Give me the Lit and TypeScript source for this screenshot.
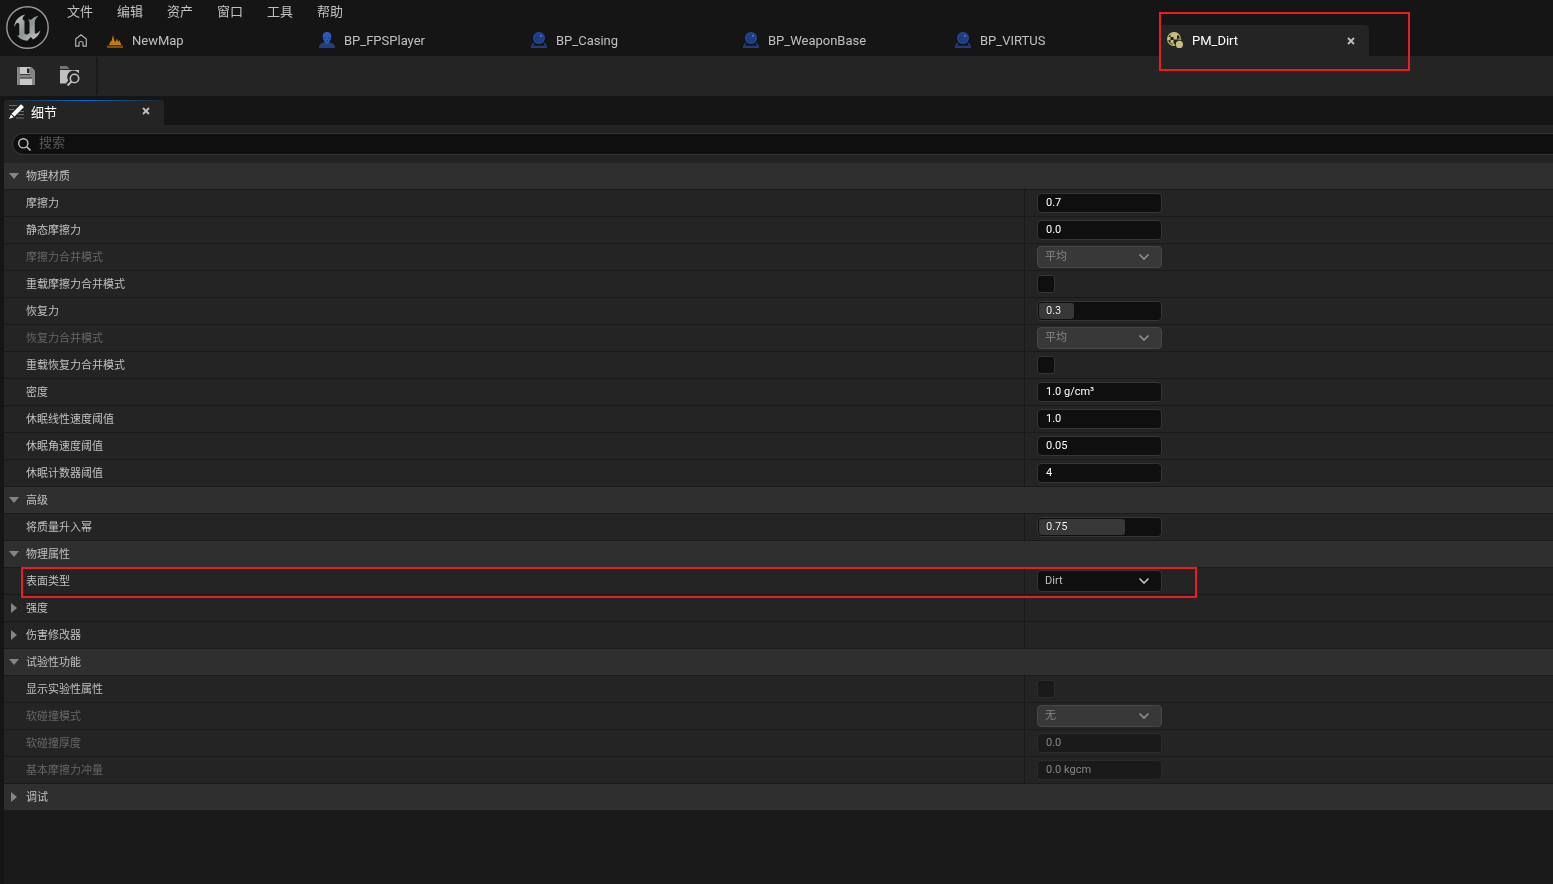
import { LitElement, html, svg, css, nothing, TemplateResult } from "lit";
import { customElement, property } from "lit/decorators.js";
import { classMap } from "lit/directives/class-map.js";
import { styleMap } from "lit/directives/style-map.js";

type Kind = "text" | "slider" | "select" | "check" | "none";

interface Row {
  id: string;
  label: string;
  kind: Kind;
  value?: string;
  ratio?: number;
  disabled?: boolean;
  labelDim?: boolean;
  expandable?: boolean;
  marked?: boolean;
}

interface Category {
  label: string;
  open: boolean;
  rows: Row[];
}

interface Tab {
  label: string;
  icon: "map" | "pawn" | "actor" | "physmat";
  active?: boolean;
}

const MENUS = ["文件", "编辑", "资产", "窗口", "工具", "帮助"];

const TABS: Tab[] = [
  { label: "NewMap", icon: "map" },
  { label: "BP_FPSPlayer", icon: "pawn" },
  { label: "BP_Casing", icon: "actor" },
  { label: "BP_WeaponBase", icon: "actor" },
  { label: "BP_VIRTUS", icon: "actor" },
  { label: "PM_Dirt", icon: "physmat", active: true },
];

const CATEGORIES: Category[] = [
  {
    label: "物理材质",
    open: true,
    rows: [
      { id: "friction", label: "摩擦力", kind: "text", value: "0.7" },
      { id: "static-friction", label: "静态摩擦力", kind: "text", value: "0.0" },
      { id: "friction-mode", label: "摩擦力合并模式", kind: "select", value: "平均", disabled: true, labelDim: true },
      { id: "override-friction", label: "重载摩擦力合并模式", kind: "check" },
      { id: "restitution", label: "恢复力", kind: "slider", value: "0.3", ratio: 0.3 },
      { id: "restitution-mode", label: "恢复力合并模式", kind: "select", value: "平均", disabled: true, labelDim: true },
      { id: "override-restitution", label: "重载恢复力合并模式", kind: "check" },
      { id: "density", label: "密度", kind: "text", value: "1.0 g/cm³" },
      { id: "sleep-linear", label: "休眠线性速度阈值", kind: "text", value: "1.0" },
      { id: "sleep-angular", label: "休眠角速度阈值", kind: "text", value: "0.05" },
      { id: "sleep-counter", label: "休眠计数器阈值", kind: "text", value: "4" },
    ],
  },
  {
    label: "高级",
    open: true,
    rows: [{ id: "mass-power", label: "将质量升入幂", kind: "slider", value: "0.75", ratio: 0.75 }],
  },
  {
    label: "物理属性",
    open: true,
    rows: [
      { id: "surface-type", label: "表面类型", kind: "select", value: "Dirt", marked: true },
      { id: "strength", label: "强度", kind: "none", expandable: true },
      { id: "damage", label: "伤害修改器", kind: "none", expandable: true },
    ],
  },
  {
    label: "试验性功能",
    open: true,
    rows: [
      { id: "show-experimental", label: "显示实验性属性", kind: "check", disabled: true },
      { id: "soft-mode", label: "软碰撞模式", kind: "select", value: "无", disabled: true, labelDim: true },
      { id: "soft-thickness", label: "软碰撞厚度", kind: "text", value: "0.0", disabled: true, labelDim: true },
      { id: "base-impulse", label: "基本摩擦力冲量", kind: "text", value: "0.0 kgcm", disabled: true, labelDim: true },
    ],
  },
  { label: "调试", open: false, rows: [] },
];

const ICONS: Record<Tab["icon"], TemplateResult> = {
  map: svg`
    <path d="M0 13.500 H16 V16 H0Z" fill="#7d5009"/>
    <path d="M2 13 L3.500 9.500 L4.500 9 L6 3 L7.500 9 L8.500 10 L10 6.500 L11.200 10 L12.200 8 L14.500 13Z" fill="#c67c05"/>`,
  pawn: svg`
    <path d="M0 16 V14.500 C.5 12 2.500 11.500 5 10.300 H11 C13.500 11.500 15.500 12 16 14.500 V16Z" fill="#243f7d"/>
    <path d="M8 0 C10.900 0 12.500 1.800 12.300 5 C12.100 7 11.200 8.500 10.200 10 C9.500 11.200 8.800 11.600 8 11.600 S6.500 11.200 5.800 10 C4.800 8.500 3.900 7 3.700 5 C3.500 1.800 5.100 0 8 0Z" fill="#2c5bc0"/>
    <path d="M5.300 5.500 H7 V6.500 H5.500Z M9 5.500 H10.700 L10.500 6.500 H9Z" fill="#142a5c"/>
    <path d="M7 8.800 H9" stroke="#142a5c" stroke-width=".8"/>`,
  actor: svg`
    <path d="M2.300 10.500 L0 14 V16 H16 V14 L13.700 10.500 L12.700 11.500 L13.800 13.800 H2.200 L3.300 11.500Z" fill="#233c78"/>
    <circle cx="8" cy="6" r="6" fill="#2348a0"/>
    <circle cx="8" cy="6" r="4.600" fill="#203c7a"/>
    <circle cx="9.900" cy="3.900" r="1.100" fill="#3f70dc"/>`,
  physmat: svg`
    <circle cx="7" cy="7" r="6.400" fill="#20201c" stroke="#c5bd7d" stroke-width="1.100"/>
    <path d="M3.500 1.700 L6.500 .6 H9 L11 1.600 V3.500 H6.500 V5 H3.500Z M6.500 3.500 H10 V7.500 H6.500Z M.8 5 H3.500 V8 H.8Z M3.500 8 H6.500 V11.500 H3.500Z M6 11.500 H7.500 V13.500 L5 13Z M10.800 7.500 H13.200 L12.500 8.500 H10.800Z" fill="#c5bd7d"/>
    <circle cx="12.400" cy="12.400" r="4.500" fill="#242424"/>
    <circle cx="12.400" cy="12.400" r="3.600" fill="#c5bd7d"/>
    <path d="M11 7.800 A1.500 1.500 0 0 1 14 7.800" fill="none" stroke="#8d885b" stroke-width="1"/>`,
};

const closeIcon = html`<svg width="8" height="8" viewBox="0 0 8 8" aria-hidden="true">
  <path d="M1 1 L7 7 M7 1 L1 7" stroke="#c0c0c0" stroke-width="1.800" fill="none" />
</svg>`;

const caret = (open: boolean) => html`<svg class="caret" width="10" height="10" viewBox="0 0 10 10" aria-hidden="true">
  ${open ? svg`<path d="M0 2 H10 L5 8Z" fill="#858585"/>` : svg`<path d="M2 0 L8 5 L2 10Z" fill="#858585"/>`}
</svg>`;

const sharedStyles = css`
  * {
    box-sizing: border-box;
  }
  button,
  input,
  select {
    margin: 0;
    font: inherit;
    color: inherit;
    outline: none;
  }
  button {
    display: flex;
    align-items: center;
    padding: 0;
    border: 0;
    background: none;
  }
  svg {
    display: block;
    flex: none;
  }
  .mark {
    position: absolute;
    z-index: 2;
    border: 2px solid #ed1c24;
    pointer-events: none;
  }
`;

@customElement("editor-header")
export class EditorHeader extends LitElement {
  static styles = [
    sharedStyles,
    css`
      :host {
        display: flex;
        height: 56px;
        background: #151515;
        color: #c0c0c0;
        font-size: 13px;
      }
      .logo {
        flex: none;
        padding: 6px;
      }
      .main {
        flex: 1;
        min-width: 0;
        display: flex;
        flex-direction: column;
      }
      .menus {
        display: flex;
        gap: 24px;
        height: 25px;
        padding: 0 12px 4px;
      }
      .strip {
        display: flex;
        height: 31px;
      }
      .home {
        flex: none;
        width: 45px;
        padding-left: 20px;
      }
      .tabs {
        display: flex;
        gap: 3px;
      }
      .tab {
        position: relative;
        display: flex;
        align-items: center;
        width: 209px;
        padding: 0 14px 0 7px;
        border-radius: 4px 4px 0 0;
      }
      .tab.active {
        background: #242424;
        color: #fff;
      }
      .title {
        flex: 1;
        gap: 9px;
      }
      .title svg {
        margin-bottom: 2px;
      }
      .mark {
        top: -13px;
        left: -1px;
        width: 251px;
        height: 59px;
      }
    `,
  ];

  render() {
    return html`
      <svg class="logo" width="55" height="55" viewBox="0 0 43 43" aria-hidden="true">
        <defs>
          <linearGradient id="steel" x1="0" y1="0" x2="1" y2="1">
            <stop offset="0" stop-color="#c4c8c8" />
            <stop offset=".5" stop-color="#8d9393" />
            <stop offset="1" stop-color="#c8cccc" />
          </linearGradient>
        </defs>
        <circle cx="21.500" cy="21.500" r="20.700" fill="#111" stroke="#9b9b9b" stroke-width="1.400" />
        <g transform="translate(-.1 -.100) scale(1.800)">
          <path
            fill="url(#steel)"
            d="M19.130 13.729c-.206.997-1.126 3.557-4.060 4.942l-1.179-1.325-1.988 2a7.338 7.338 0 0 1-5.804-2.978 2.859 2.859 0 0 0 .65.123c.326.006.678-.114.678-.66v-5.394a.89.89 0 0 0-1.116-.89c-.92.212-1.656 2.509-1.656 2.509a7.304 7.304 0 0 1 2.528-5.597 7.408 7.408 0 0 1 3.730-1.721c-1.006.573-1.570 1.507-1.570 2.290 0 1.262.76 1.109.984.923v7.280a1.157 1.157 0 0 0 .148.256 1.075 1.075 0 0 0 .88.445c.76 0 1.747-.868 1.747-.868V9.172c0-.6-.452-1.324-.905-1.572 0 0 .838-.149 1.484.346a5.537 5.537 0 0 1 .387-.425c1.508-1.480 2.929-1.902 4.112-2.112 0 0-2.151 1.690-2.151 3.960 0 1.687.043 5.801.043 5.801.799.771 1.986-.342 3.059-1.441Z"
          />
        </g>
      </svg>
      <div class="main">
        <nav class="menus">${MENUS.map((m) => html`<button type="button">${m}</button>`)}</nav>
        <div class="strip">
          <button class="home" type="button" aria-label="Home">
            <svg width="12" height="13" viewBox="0 0 12 13" aria-hidden="true">
              <path
                d="M.700 5 L6 .8 L11.300 5 V12.200 H8 V9 Q8 7.500 6 7.500 T4 9 V12.200 H.7Z"
                fill="none"
                stroke="#b0b0b0"
                stroke-width="1.200"
                stroke-linejoin="round"
              />
            </svg>
          </button>
          <div class="tabs">
            ${TABS.map(
              (t) => html`<div class=${classMap({ tab: true, active: !!t.active })}>
                <button class="title" type="button">
                  <svg width="16" height="16" viewBox="0 0 16 16" aria-hidden="true">${ICONS[t.icon]}</svg>
                  <span>${t.label}</span>
                </button>
                ${t.active
                  ? html`<button type="button" aria-label="Close">${closeIcon}</button>
                      <div class="mark"></div>`
                  : nothing}
              </div>`
            )}
          </div>
        </div>
      </div>
    `;
  }
}

@customElement("asset-toolbar")
export class AssetToolbar extends LitElement {
  static styles = [
    sharedStyles,
    css`
      :host {
        display: flex;
        height: 40px;
        background: #242424;
      }
      .tools {
        display: flex;
        gap: 24px;
        margin: 1px 0;
        padding: 0 16px 0 17px;
        border-right: 2px solid #1a1a1a;
      }
    `,
  ];

  render() {
    return html`
      <div class="tools">
        <button type="button" aria-label="Save">
          <svg width="18" height="18" viewBox="0 0 18 18" aria-hidden="true">
            <path d="M0 0 H14.500 L18 3.500 V18 H0Z" fill="#858585" />
            <path d="M3 0 H13 V7.500 H3Z M3 11.500 H15 V18 H3Z" fill="#c8c8c8" />
            <path d="M10 1.500 H12.500 V6 H10Z" fill="#242424" />
            <path d="M3 7.500 H13 M3 11 H15" stroke="#3a3a3a" stroke-width="1" />
          </svg>
        </button>
        <button type="button" aria-label="Browse">
          <svg width="21" height="20" viewBox="0 0 21 20" aria-hidden="true">
            <path d="M1 0 H8 L10.500 3 H1Z" fill="#757575" />
            <path d="M1 4 H20 V7.500 A6.300 6.300 0 0 0 9.200 14.500 L7 17.500 H1Z" fill="#c0c0c0" />
            <circle cx="15.500" cy="12.500" r="6" fill="#242424" />
            <circle cx="15.500" cy="12.500" r="4.200" fill="none" stroke="#c0c0c0" stroke-width="1.600" />
            <path d="M12.500 15.500 L8.500 19.500" stroke="#c0c0c0" stroke-width="2" />
          </svg>
        </button>
      </div>
    `;
  }
}

@customElement("property-row")
export class PropertyRow extends LitElement {
  @property({ attribute: false }) row!: Row;

  static styles = [
    sharedStyles,
    css`
      :host {
        position: relative;
        display: grid;
        grid-template-columns: 1021fr 528fr;
        height: 27px;
        border-bottom: 1px solid #1a1a1a;
        background: #242424;
      }
      .name {
        display: flex;
        align-items: center;
        padding: 0 0 3px 22px;
        border-right: 1px solid #1a1a1a;
      }
      .name.expandable {
        gap: 7px;
        padding-left: 5px;
      }
      .name.expandable .caret {
        margin-top: 3px;
      }
      .name.dim {
        color: #666;
      }
      .value {
        display: flex;
        align-items: center;
        padding-left: 12px;
      }
      .field {
        display: grid;
        width: 125px;
      }
      .field > * {
        grid-area: 1 / 1;
      }
      .text {
        width: 100%;
        height: 20px;
        padding: 0 8px 2px;
        border: 1px solid #353535;
        border-radius: 4px;
        background: #0f0f0f;
        color: #fff;
      }
      .text:disabled {
        border-color: #2b2b2b;
        background: #1a1a1a;
        color: #888;
      }
      .fill {
        z-index: 1;
        height: 16px;
        margin: 2px;
        border-radius: 3px;
        background: #383838;
        mix-blend-mode: lighten;
        pointer-events: none;
      }
      .drop {
        width: 100%;
        height: 22px;
        padding: 0 24px 2px 7px;
        border: 1px solid #353535;
        border-radius: 4px;
        background: #0f0f0f;
        color: #c0c0c0;
        appearance: none;
      }
      .drop:disabled {
        border-color: #484848;
        background: #383838;
        color: #888;
        opacity: 1;
      }
      .chevron {
        place-self: center end;
        margin-right: 13px;
        color: #c0c0c0;
        pointer-events: none;
      }
      .drop:disabled + .chevron {
        color: #909090;
      }
      .check {
        width: 18px;
        height: 18px;
        border: 1px solid #353535;
        border-radius: 3px;
        background: #0f0f0f;
        appearance: none;
      }
      .check:disabled {
        border-color: #2b2b2b;
        background: #1a1a1a;
      }
      .mark {
        top: -1px;
        left: 17px;
        width: 1176px;
        height: 31px;
      }
    `,
  ];

  private control() {
    const r = this.row;
    switch (r.kind) {
      case "text":
        return html`<div class="field">
          <input class="text" id=${r.id} type="text" .value=${r.value ?? ""} ?disabled=${r.disabled} />
        </div>`;
      case "slider":
        return html`<div class="field">
          <input class="text" id=${r.id} type="text" .value=${r.value ?? ""} />
          <div class="fill" style=${styleMap({ width: `${(r.ratio ?? 0) * 92}%` })}></div>
        </div>`;
      case "select":
        return html`<div class="field">
          <select class="drop" id=${r.id} ?disabled=${r.disabled}>
            <option>${r.value}</option>
          </select>
          <svg class="chevron" width="10" height="6" viewBox="0 0 10 6" aria-hidden="true">
            <path d="M1 1 L5 5 L9 1" fill="none" stroke="currentColor" stroke-width="1.700" stroke-linecap="round" />
          </svg>
        </div>`;
      case "check":
        return html`<input class="check" id=${r.id} type="checkbox" ?disabled=${r.disabled} />`;
      default:
        return nothing;
    }
  }

  render() {
    const r = this.row;
    return html`
      ${r.expandable
        ? html`<button class="name expandable" type="button" aria-expanded="false">${caret(false)}<span>${r.label}</span></button>`
        : html`<label class=${classMap({ name: true, dim: !!r.labelDim })} for=${r.id}>${r.label}</label>`}
      <div class="value">${this.control()}</div>
      ${r.marked ? html`<div class="mark"></div>` : nothing}
    `;
  }
}

@customElement("details-panel")
export class DetailsPanel extends LitElement {
  static styles = [
    sharedStyles,
    css`
      :host {
        display: block;
        padding: 4px 0 0 4px;
        background: #151515;
      }
      .tab {
        display: flex;
        align-items: center;
        gap: 7px;
        width: 160px;
        height: 25px;
        padding: 0 14px 3px 5px;
        border-radius: 4px 4px 0 0;
        background:
          linear-gradient(90deg, #242424, #0070e0 50%, #242424) top / 100% 1px no-repeat,
          #242424;
        color: #fff;
        font-size: 13px;
      }
      .tab h2 {
        flex: 1;
        margin: 0;
        font: inherit;
      }
      .body {
        min-height: calc(100vh - 125px);
        background: #1a1a1a;
      }
      .searchbar {
        padding: 8px 0 8px 8px;
        background: #242424;
      }
      .search {
        display: flex;
        align-items: center;
        gap: 8px;
        height: 22px;
        padding-left: 5px;
        border: 1px solid #353535;
        border-right: 0;
        border-radius: 11px 0 0 11px;
        background: #0f0f0f;
        color: #c0c0c0;
        font-size: 13px;
      }
      .search input {
        flex: 1;
        min-width: 0;
        height: 20px;
        padding: 0 0 4px;
        border: 0;
        background: none;
      }
      .search input::placeholder {
        color: #575757;
      }
      .category {
        gap: 7px;
        width: 100%;
        height: 27px;
        padding: 0 5px 3px;
        border-bottom: 1px solid #1a1a1a;
        background: #2f2f2f;
      }
      .category .caret {
        margin-top: 3px;
      }
    `,
  ];

  render() {
    return html`
      <div class="tab">
        <svg width="15" height="15" viewBox="0 0 15 15" aria-hidden="true">
          <path d="M0 1.500 H8 M0 5.500 H5 M9 10.500 H15 M7 14 H15 M11 7.500 H15" stroke="#6c6c6c" stroke-width="1.200" />
          <path d="M12 .3 L15 3 L5.500 12.500 L2.500 9.700Z M2 10.500 L4.700 13.200 L0 15Z" fill="#fff" />
        </svg>
        <h2>细节</h2>
        <button type="button" aria-label="Close">${closeIcon}</button>
      </div>
      <div class="body">
        <div class="searchbar">
          <div class="search">
            <svg width="13" height="13" viewBox="0 0 13 13" aria-hidden="true">
              <circle cx="5.300" cy="5.300" r="4.600" fill="none" stroke="#c0c0c0" stroke-width="1.400" />
              <path d="M8.700 8.700 L12.500 12.500" stroke="#c0c0c0" stroke-width="1.600" />
            </svg>
            <input type="text" aria-label="搜索" placeholder="搜索" />
          </div>
        </div>
        ${CATEGORIES.map(
          (c) => html`
            <button class="category" type="button" aria-expanded=${c.open ? "true" : "false"}>
              ${caret(c.open)}<span>${c.label}</span>
            </button>
            ${c.rows.map((r) => html`<property-row .row=${r}></property-row>`)}
          `
        )}
      </div>
    `;
  }
}

@customElement("app-root")
export class AppRoot extends LitElement {
  static styles = css`
    :host {
      display: block;
      min-height: 100vh;
      overflow-x: hidden;
      background: #151515;
      color: #c0c0c0;
      font-family: Roboto, "Noto Sans CJK SC", sans-serif;
      font-size: 11px;
    }
  `;

  render() {
    return html`
      <editor-header></editor-header>
      <asset-toolbar></asset-toolbar>
      <details-panel></details-panel>
    `;
  }
}
